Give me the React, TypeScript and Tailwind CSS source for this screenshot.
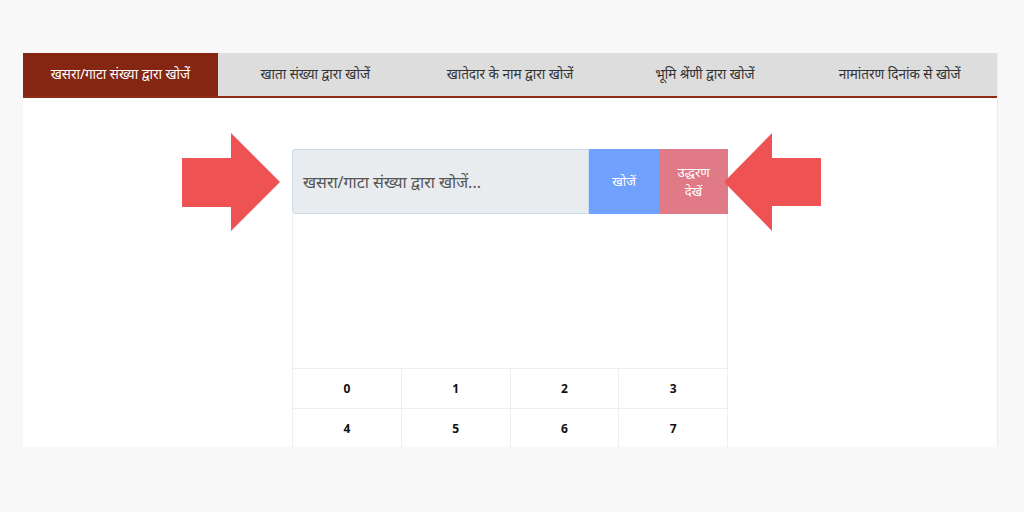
import React from "react";

const tabs = [
  "खसरा/गाटा संख्या द्वारा खोजें",
  "खाता संख्या द्वारा खोजें",
  "खातेदार के नाम द्वारा खोजें",
  "भूमि श्रेंणी द्वारा खोजें",
  "नामांतरण दिनांक से खोजें",
];

const digits = ["0", "1", "2", "3", "4", "5", "6", "7"];

function RightArrow() {
  return (
    <svg width="98" height="99" viewBox="0 0 98 99" className="shrink-0">
      <polygon points="0,25 49,25 49,0 98,49 49,98 49,74 0,74" fill="#ee5253" />
    </svg>
  );
}

function LeftArrow() {
  return (
    <svg width="97" height="99" viewBox="0 0 97 99" className="shrink-0">
      <polygon points="97,25 48,25 48,0 0,49 48,98 48,73 97,73" fill="#ee5253" />
    </svg>
  );
}

export default function App() {
  return (
    <div
      className="w-[1024px] h-[512px] bg-[#f8f8f8] pt-[53px] pl-[23px] overflow-hidden"
      style={{ fontFamily: '"Noto Sans", "Liberation Sans", sans-serif' }}
    >
      <div className="w-[975px] h-[394px] bg-white border-r border-[#ececec] overflow-hidden flex flex-col">
        <div className="flex h-[45px] bg-[#dddddd] border-b-2 border-[#8e2d17] shrink-0">
          {tabs.map((t, i) => (
            <div
              key={t}
              className={
                i === 0
                  ? "flex-1 flex items-center justify-center bg-[#842612] text-white text-[13.5px]"
                  : "flex-1 flex items-center justify-center text-[#333333] text-[13.5px]"
              }
            >
              {t}
            </div>
          ))}
        </div>
        <div className="flex justify-center items-start pt-[51px] pr-[17px]">
          <div className="mt-[-16px] mr-[12px]">
            <RightArrow />
          </div>
          <div className="w-[436px] shrink-0 flex flex-col">
            <div className="flex h-[65px]">
              <div className="flex-1 bg-[#e8ecef] border border-[#c8ddee] rounded-l-[3px] flex items-center pl-[10px] text-[16px] text-[#555555]">
                खसरा/गाटा संख्या द्वारा खोजें...
              </div>
              <div className="w-[70px] bg-[#70a1fe] flex items-center justify-center text-white text-[13px]">
                खोजें
              </div>
              <div className="w-[69px] bg-[#e07a86] flex items-center justify-center text-center text-white text-[13px] leading-[19px]">
                उद्धरण<br />देखें
              </div>
            </div>
            <div className="h-[154px] border-x border-[#eceef1]" />
            <div className="grid grid-cols-4 border-t border-l border-[#eceef1]">
              {digits.map((d) => (
                <div
                  key={d}
                  className="h-[40px] flex items-center justify-center border-r border-b border-[#eceef1] text-[12px] font-bold text-[#111111]"
                  style={{ fontFamily: '"Open Sans", sans-serif' }}
                >
                  {d}
                </div>
              ))}
            </div>
          </div>
          <div className="mt-[-16px] ml-[-4px]">
            <LeftArrow />
          </div>
        </div>
      </div>
    </div>
  );
}
